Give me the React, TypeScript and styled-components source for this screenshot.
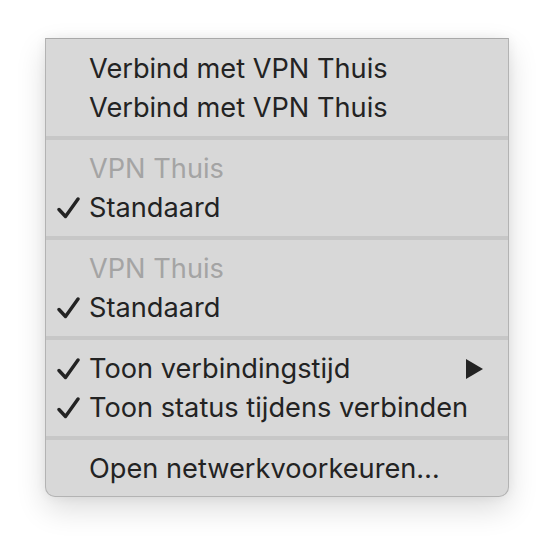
import React from 'react'
import styled, { createGlobalStyle } from 'styled-components'

const GlobalStyle = createGlobalStyle`
  html, body {
    margin: 0;
    padding: 0;
    background: #ffffff;
  }
  body {
    font-family: Inter, "Noto Sans", "Liberation Sans", sans-serif;
  }
`

const Page = styled.div`
  padding: 38px 0 0 45px;
  width: 554px;
  height: 550px;
  box-sizing: border-box;
`

const Menu = styled.div`
  width: 464px;
  box-sizing: border-box;
  background: #d8d8d8;
  border: 1px solid #b3b3b3;
  border-top-color: #a9a9a9;
  border-radius: 0 0 10px 10px;
  box-shadow: 0 12px 30px rgba(0, 0, 0, 0.14), 0 0 12px rgba(0, 0, 0, 0.06);
`

const Section = styled.div<{ $first?: boolean; $last?: boolean }>`
  padding-top: ${({ $first }) => ($first ? '10px' : '9px')};
  padding-bottom: ${({ $last }) => ($last ? '8px' : '9px')};
`

const Separator = styled.div`
  height: 4px;
  background: #c7c7c7;
`

const Item = styled.div<{ $disabled?: boolean }>`
  display: grid;
  grid-template-columns: 43px 1fr auto;
  align-items: center;
  height: 39px;
  line-height: 39px;
  font-size: 27.2px;
  color: ${({ $disabled }) => ($disabled ? '#a4a4a4' : '#232323')};
`

const Gutter = styled.div`
  display: flex;
  align-items: center;
  padding-left: 11px;
`

const Label = styled.span`
  white-space: nowrap;
`

const Arrow = styled.div`
  width: 0;
  height: 0;
  margin-right: 25px;
  border-top: 10px solid transparent;
  border-bottom: 10px solid transparent;
  border-left: 17px solid #232323;
`

const Check = () => (
  <svg width="23" height="22" viewBox="0 0 23 22">
    <path
      d="M2 12.5 L8.5 19.5 L21 2"
      fill="none"
      stroke="#232323"
      strokeWidth="3.4"
      strokeLinecap="round"
      strokeLinejoin="round"
    />
  </svg>
)

interface RowProps {
  label: string
  checked?: boolean
  disabled?: boolean
  submenu?: boolean
}

const Row = ({ label, checked, disabled, submenu }: RowProps) => (
  <Item $disabled={disabled}>
    <Gutter>{checked && <Check />}</Gutter>
    <Label>{label}</Label>
    {submenu ? <Arrow /> : <span />}
  </Item>
)

const App = () => {
  return (
    <Page>
      <GlobalStyle />
      <Menu>
        <Section $first>
          <Row label="Verbind met VPN Thuis" />
          <Row label="Verbind met VPN Thuis" />
        </Section>
        <Separator />
        <Section>
          <Row label="VPN Thuis" disabled />
          <Row label="Standaard" checked />
        </Section>
        <Separator />
        <Section>
          <Row label="VPN Thuis" disabled />
          <Row label="Standaard" checked />
        </Section>
        <Separator />
        <Section>
          <Row label="Toon verbindingstijd" checked submenu />
          <Row label="Toon status tijdens verbinden" checked />
        </Section>
        <Separator />
        <Section $last>
          <Row label="Open netwerkvoorkeuren…" />
        </Section>
      </Menu>
    </Page>
  )
}

export default App
